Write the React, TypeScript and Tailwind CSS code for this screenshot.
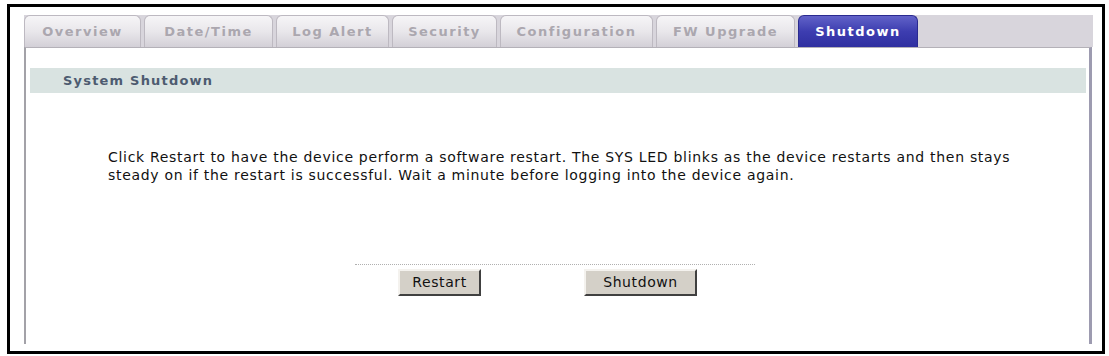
const tabs = [
  { label: "Overview", w: "w-[117px]" },
  { label: "Date/Time", w: "w-[129px]" },
  { label: "Log Alert", w: "w-[113px]" },
  { label: "Security", w: "w-[105px]" },
  { label: "Configuration", w: "w-[153px]" },
  { label: "FW Upgrade", w: "w-[139px]" },
];

function Tab({ label, w }: { label: string; w: string }) {
  return (
    <div
      className={`${w} h-full rounded-t-[6px] border border-b-0 border-[#bdb9c1] bg-gradient-to-b from-[#f6f5f7] via-[#e9e7eb] to-[#d3d0d7] flex items-center justify-center text-[13px] font-bold tracking-[1.5px] text-[#aba7af]`}
    >
      {label}
    </div>
  );
}

function ClassicButton({ label, w }: { label: string; w: string }) {
  return (
    <button
      className={`${w} h-[27px] bg-[#d4d0c8] border-2 border-t-[#f4f2ee] border-l-[#f4f2ee] border-r-[#404040] border-b-[#404040] text-[14px] tracking-[0.6px] text-[#111] flex items-center justify-center`}
    >
      {label}
    </button>
  );
}

export default function App() {
  return (
    <div
      className="w-[1109px] h-[356px] bg-white overflow-hidden pt-[4px] pl-[7px]"
      style={{ fontFamily: '"DejaVu Sans", Verdana, sans-serif' }}
    >
      <div className="w-[1098px] h-[350px] border-[3px] border-black pt-[8px] pl-[14px]">
        {/* tab strip */}
        <div className="w-[1069px] h-[32px] bg-[#d8d5dc] flex gap-[3px]">
          {tabs.map((t) => (
            <Tab key={t.label} {...t} />
          ))}
          <div className="w-[120px] h-full rounded-t-[6px] bg-gradient-to-b from-[#6262c8] via-[#3d3db0] to-[#2f2fa0] border border-b-0 border-[#2a2a90] flex items-center justify-center text-[13px] font-bold tracking-[1.5px] text-white">
            Shutdown
          </div>
        </div>

        {/* panel */}
        <div className="w-[1068px] h-[297px] bg-white border-t border-[#b4b1b8] border-l-2 border-l-[#a3a2a8] border-r-[3px] border-r-[#9d9bb0] pt-[20px] pl-[4px] pr-[3px]">
          <div className="h-[25px] bg-[#d9e3e1] flex items-center pl-[33px] text-[13px] font-bold tracking-[1.2px] text-[#4d5b70]">
            System Shutdown
          </div>

          <div className="pl-[78px] pt-[55px] text-[14px] leading-[18px] tracking-[0.7px] text-[#111]">
            <p>
              Click Restart to have the device perform a software restart. The SYS LED blinks as the device restarts and then stays
            </p>
            <p>steady on if the restart is successful. Wait a minute before logging into the device again.</p>
          </div>

          <div className="ml-[325px] mt-[80px] w-[400px] border-t border-dotted border-[#b0b0b0] pt-[4px] pl-[43px] flex gap-[103px]">
            <ClassicButton label="Restart" w="w-[83px]" />
            <ClassicButton label="Shutdown" w="w-[113px]" />
          </div>
        </div>
      </div>
    </div>
  );
}
